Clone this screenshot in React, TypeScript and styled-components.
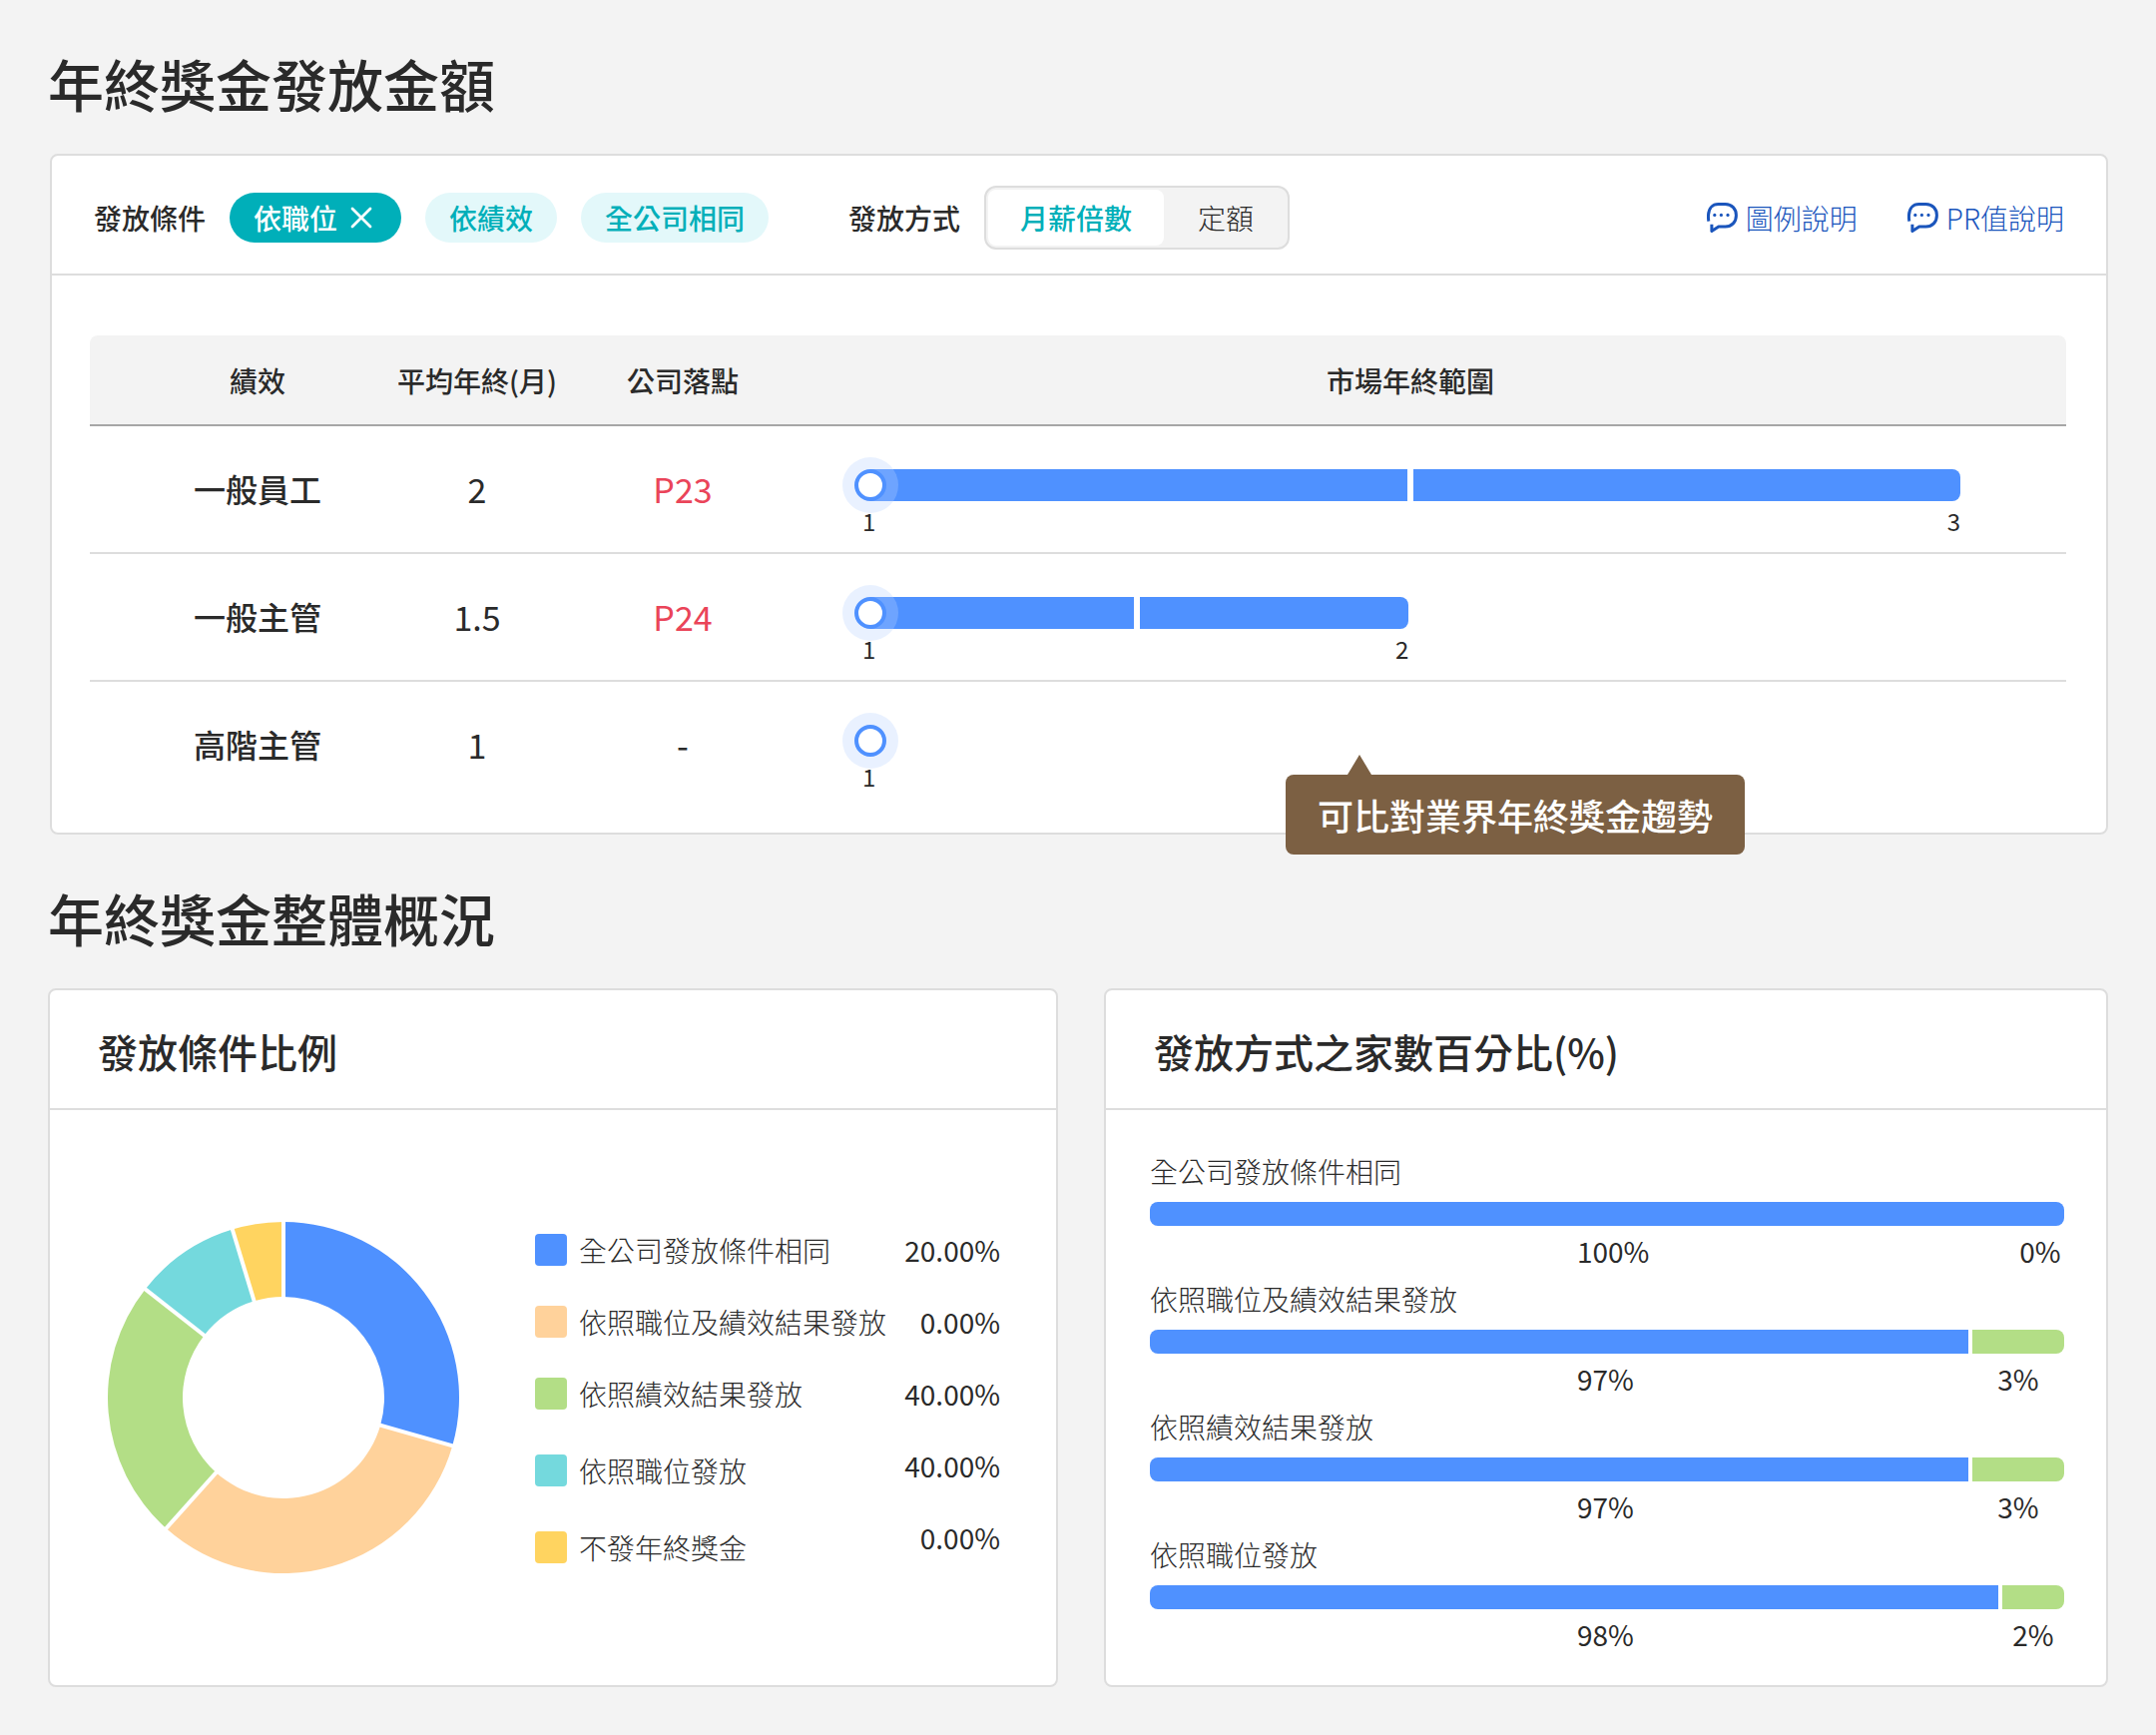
import React, { useState } from "react";
import styled, { createGlobalStyle } from "styled-components";

const color = {
  page: "#f3f3f3",
  line: "#dddddd",
  text: "#2a2a2a",
  teal: "#00afb9",
  tealSoft: "#e3f8fa",
  blue: "#4f91ff",
  peach: "#ffd29b",
  green: "#b3de86",
  aqua: "#74d9dd",
  yellow: "#ffd460",
  red: "#ea4459",
  link: "#1a55bc",
  brown: "#7c6043",
};

const GlobalStyle = createGlobalStyle`
  *, *::before, *::after { box-sizing: border-box; }
  body {
    margin: 0;
    background: ${color.page};
    color: ${color.text};
    font-family: "Noto Sans CJK TC", "Open Sans", sans-serif;
    font-size: 28px;
  }
  button { font: inherit; border: 0; cursor: pointer; }
`;

const Page = styled.main`
  padding: 46px 48px 48px;
`;

const SectionTitle = styled.h1`
  margin: 0 0 34px;
  font-size: 56px;
  line-height: 74px;
  font-weight: 500;
`;

const Card = styled.section`
  position: relative;
  background: #fff;
  border: 2px solid ${color.line};
  border-radius: 8px;
`;

const AmountCard = styled(Card)`
  margin: 0 0 46px 2px;
`;

const Toolbar = styled.div`
  display: flex;
  align-items: center;
  padding: 30px 42px 24px;
  border-bottom: 2px solid ${color.line};
`;

const ControlGroup = styled.div`
  display: flex;
  align-items: center;
  gap: 24px;
  margin-right: 80px;
`;

const ControlLabel = styled.span`
  font-weight: 500;
  line-height: 40px;
`;

const Chip = styled.button<{ $active: boolean }>`
  display: flex;
  align-items: center;
  gap: 8px;
  height: 50px;
  padding: 0 24px;
  border-radius: 25px;
  font-weight: 500;
  background: ${(p) => (p.$active ? color.teal : color.tealSoft)};
  color: ${(p) => (p.$active ? "#fff" : color.teal)};
`;

const Segmented = styled.div`
  display: flex;
  gap: 2px;
  height: 64px;
  padding: 2px;
  border: 2px solid ${color.line};
  border-radius: 12px;
  background: ${color.page};
`;

const Segment = styled.button<{ $active: boolean }>`
  padding: 0 32px;
  border-radius: 8px;
  background: ${(p) => (p.$active ? "#fff" : "transparent")};
  color: ${(p) => (p.$active ? color.teal : color.text)};
  font-weight: ${(p) => (p.$active ? 500 : 300)};
`;

const HelpLinks = styled.nav`
  display: flex;
  gap: 50px;
  margin-left: auto;
`;

const HelpLink = styled.a`
  display: flex;
  align-items: center;
  gap: 8px;
  line-height: 40px;
  font-weight: 300;
  color: ${color.link};
  text-decoration: none;
`;

const TableWrap = styled.div`
  padding: 60px 40px 25px 38px;
`;

const Table = styled.table`
  width: 100%;
  table-layout: fixed;
  border-collapse: separate;
  border-spacing: 0;
`;

const NameCol = styled.col`
  width: 254px;
`;
const AverageCol = styled.col`
  width: 268px;
`;
const PositionCol = styled.col`
  width: 144px;
`;

const HeadCell = styled.th`
  height: 91px;
  padding: 0;
  background: ${color.page};
  border-bottom: 2px solid #a6a6a6;
  font-weight: 500;
  &:first-child {
    padding-left: 82px;
    border-radius: 8px 0 0 0;
  }
  &:last-child {
    border-radius: 0 8px 0 0;
  }
`;

const Row = styled.tr`
  height: 128px;
  &:last-child {
    height: 126px;
  }
  & > * {
    padding: 0 0 2px;
    border-bottom: 2px solid ${color.line};
    text-align: center;
  }
  &:last-child > * {
    border-bottom: 0;
  }
`;

const NameCell = styled.th`
  && {
    padding-left: 82px;
  }
  font-size: 32px;
  font-weight: 500;
`;

const NumberCell = styled.td<{ $accent?: boolean }>`
  font-size: 34px;
  font-weight: 400;
  color: ${(p) => (p.$accent ? color.red : color.text)};
`;

const RangeCell = styled.td`
  && {
    padding: 43px 106px 0 116px;
    vertical-align: top;
  }
`;

const RangeTrack = styled.div`
  position: relative;
  height: 32px;
`;

const RangeBar = styled.div`
  display: flex;
  gap: 6px;
  height: 100%;
`;

const RangeHalf = styled.span`
  flex: 98;
  background: ${color.blue};
  &:last-child {
    flex: 100;
    border-radius: 0 8px 8px 0;
  }
`;

const Marker = styled.svg`
  position: absolute;
  left: -28px;
  top: -12px;
`;

const RangeScale = styled.div`
  display: flex;
  justify-content: space-between;
  margin: 4px 0 0 -8px;
  font-size: 24px;
  line-height: 32px;
  font-weight: 400;
`;

const Tooltip = styled.div`
  position: absolute;
  right: 362px;
  bottom: -22px;
  padding: 0 32px;
  border-radius: 8px;
  background: ${color.brown};
  color: #fff;
  font-size: 36px;
  line-height: 80px;
  font-weight: 500;
  &::before {
    content: "";
    position: absolute;
    left: 62px;
    bottom: 100%;
    border: solid transparent;
    border-width: 0 12px 20px;
    border-bottom-color: ${color.brown};
  }
`;

const Overview = styled.div`
  display: grid;
  grid-template-columns: 1012fr 1006fr;
  gap: 46px;
`;

const CardTitle = styled.h2`
  margin: 0;
  padding: 4px 48px 0;
  border-bottom: 2px solid ${color.line};
  font-size: 40px;
  line-height: 114px;
  font-weight: 500;
`;

const DonutBody = styled.div`
  display: flex;
  align-items: flex-start;
  padding: 112px 56px 0 58px;
`;

const Legend = styled.div`
  display: flex;
  flex: 1;
  justify-content: space-between;
  margin: 12px 0 0 76px;
`;

const LegendList = styled.ul`
  margin: 0;
  padding: 0;
  list-style: none;
  line-height: 32px;
`;

const LegendLabel = styled.li`
  display: flex;
  gap: 12px;
  font-weight: 300;
  & + & {
    margin-top: 40px;
  }
  &:nth-child(n + 4) {
    margin-top: 45px;
  }
`;

const Swatch = styled.span<{ $color: string }>`
  width: 32px;
  height: 32px;
  border-radius: 4px;
  background: ${(p) => p.$color};
`;

const LegendValue = styled.li`
  text-align: right;
  font-weight: 400;
  & + & {
    margin-top: 40px;
  }
`;

const ShareBody = styled.div`
  display: grid;
  gap: 6px;
  padding: 40px 42px 30px 44px;
  line-height: 42px;
  font-weight: 300;
`;

const ShareBar = styled.div`
  display: flex;
  gap: 4px;
  height: 24px;
  margin: 10px 0 4px;
  border-radius: 8px;
  overflow: hidden;
`;

const ShareMain = styled.span`
  flex: 1;
  background: ${color.blue};
`;

const ShareRest = styled.span`
  background: ${color.green};
`;

const ShareValues = styled.div`
  display: flex;
  font-weight: 400;
`;

const MainValue = styled.span`
  flex: 1;
  padding-left: 428px;
`;

const RestValue = styled.span`
  min-width: 48px;
  text-align: center;
`;

const BubbleIcon = () => (
  <svg width="31" height="30" viewBox="0 0 31 30" fill="none" aria-hidden="true">
    <path
      d="M1.9 18.6C1.4 16.6 1.4 14.6 1.5 12.4C1.9 5.6 5.6 1.5 11.5 1.5H18.5C25 1.5 29.4 6 29.4 12.7C29.4 19.4 25 24 18.5 24H11.8L4.9 28.5V21.8"
      stroke="currentColor"
      strokeWidth="3"
      strokeLinejoin="round"
    />
    <g fill="currentColor">
      <circle cx="7.8" cy="12.4" r="1.6" />
      <circle cx="14.4" cy="12.4" r="1.6" />
      <circle cx="21" cy="12.4" r="1.6" />
    </g>
  </svg>
);

const CloseIcon = () => (
  <svg width="32" height="32" viewBox="0 0 32 32" fill="none" aria-hidden="true">
    <path d="M7 7L25 25M25 7L7 25" stroke="currentColor" strokeWidth="2.8" strokeLinecap="round" />
  </svg>
);

const conditions = ["依職位", "依績效", "全公司相同"];
const methods = ["月薪倍數", "定額"];

const rows = [
  { name: "一般員工", average: "2", position: "P23", low: 1, high: 3, width: 100 },
  { name: "一般主管", average: "1.5", position: "P24", low: 1, high: 2, width: 49.4 },
  { name: "高階主管", average: "1", position: "-", low: 1, high: 1, width: 0 },
];

const slices = [
  { label: "全公司發放條件相同", value: "20.00%", color: color.blue, from: 0, to: 105.9 },
  { label: "依照職位及績效結果發放", value: "0.00%", color: color.peach, from: 105.9, to: 221.9 },
  { label: "依照績效結果發放", value: "40.00%", color: color.green, from: 221.9, to: 308.1 },
  { label: "依照職位發放", value: "40.00%", color: color.aqua, from: 308.1, to: 343.1 },
  { label: "不發年終獎金", value: "0.00%", color: color.yellow, from: 343.1, to: 360 },
];

const shares = [
  { label: "全公司發放條件相同", main: "100%", rest: "0%", width: 0 },
  { label: "依照職位及績效結果發放", main: "97%", rest: "3%", width: 92 / 916 },
  { label: "依照績效結果發放", main: "97%", rest: "3%", width: 92 / 916 },
  { label: "依照職位發放", main: "98%", rest: "2%", width: 62 / 916 },
];

const point = (radius: number, angle: number) => {
  const a = (angle * Math.PI) / 180;
  return `${176 + radius * Math.sin(a)} ${176 - radius * Math.cos(a)}`;
};

const Donut = () => (
  <svg width="352" height="352" viewBox="0 0 352 352" role="img" aria-label="發放條件比例">
    {slices.map((s) => {
      const large = s.to - s.from > 180 ? 1 : 0;
      return (
        <path
          key={s.label}
          fill={s.color}
          d={`M${point(176, s.from)}A176 176 0 ${large} 1 ${point(176, s.to)}L${point(101, s.to)}A101 101 0 ${large} 0 ${point(101, s.from)}Z`}
        />
      );
    })}
    {slices.map((s) => (
      <path key={s.label} d={`M${point(98, s.from)}L${point(180, s.from)}`} stroke="#fff" strokeWidth="4" />
    ))}
  </svg>
);

export default function App() {
  const [condition, setCondition] = useState(conditions[0]);
  const [method, setMethod] = useState(methods[0]);

  return (
    <>
      <GlobalStyle />
      <Page>
        <SectionTitle>年終獎金發放金額</SectionTitle>
        <AmountCard>
          <Toolbar>
            <ControlGroup role="group" aria-labelledby="condition-label">
              <ControlLabel id="condition-label">發放條件</ControlLabel>
              {conditions.map((c) => (
                <Chip key={c} type="button" $active={c === condition} aria-pressed={c === condition} onClick={() => setCondition(c)}>
                  {c}
                  {c === condition && <CloseIcon />}
                </Chip>
              ))}
            </ControlGroup>
            <ControlGroup role="group" aria-labelledby="method-label">
              <ControlLabel id="method-label">發放方式</ControlLabel>
              <Segmented>
                {methods.map((m) => (
                  <Segment key={m} type="button" $active={m === method} aria-pressed={m === method} onClick={() => setMethod(m)}>
                    {m}
                  </Segment>
                ))}
              </Segmented>
            </ControlGroup>
            <HelpLinks>
              <HelpLink href="#legend">
                <BubbleIcon />
                圖例說明
              </HelpLink>
              <HelpLink href="#pr">
                <BubbleIcon />
                PR值說明
              </HelpLink>
            </HelpLinks>
          </Toolbar>
          <TableWrap>
            <Table>
              <colgroup>
                <NameCol />
                <AverageCol />
                <PositionCol />
                <col />
              </colgroup>
              <thead>
                <tr>
                  <HeadCell scope="col">績效</HeadCell>
                  <HeadCell scope="col">平均年終(月)</HeadCell>
                  <HeadCell scope="col">公司落點</HeadCell>
                  <HeadCell scope="col">市場年終範圍</HeadCell>
                </tr>
              </thead>
              <tbody>
                {rows.map((r) => (
                  <Row key={r.name}>
                    <NameCell scope="row">{r.name}</NameCell>
                    <NumberCell>{r.average}</NumberCell>
                    <NumberCell $accent={r.position !== "-"}>{r.position}</NumberCell>
                    <RangeCell>
                      <div style={{ width: `${r.width}%` }}>
                        <RangeTrack>
                          {r.width > 0 && (
                            <RangeBar>
                              <RangeHalf />
                              <RangeHalf />
                            </RangeBar>
                          )}
                          <Marker width="56" height="56" viewBox="0 0 56 56" aria-hidden="true">
                            <circle cx="28" cy="28" r="28" fill="rgba(182, 208, 255, 0.3)" />
                            <circle cx="28" cy="28" r="14" fill="#fff" stroke={color.blue} strokeWidth="4" />
                          </Marker>
                        </RangeTrack>
                        <RangeScale>
                          <span>{r.low}</span>
                          {r.width > 0 && <span>{r.high}</span>}
                        </RangeScale>
                      </div>
                    </RangeCell>
                  </Row>
                ))}
              </tbody>
            </Table>
          </TableWrap>
          <Tooltip role="tooltip">可比對業界年終獎金趨勢</Tooltip>
        </AmountCard>

        <SectionTitle>年終獎金整體概況</SectionTitle>
        <Overview>
          <Card>
            <CardTitle>發放條件比例</CardTitle>
            <DonutBody>
              <Donut />
              <Legend>
                <LegendList>
                  {slices.map((s) => (
                    <LegendLabel key={s.label}>
                      <Swatch $color={s.color} />
                      {s.label}
                    </LegendLabel>
                  ))}
                </LegendList>
                <LegendList>
                  {slices.map((s) => (
                    <LegendValue key={s.label}>{s.value}</LegendValue>
                  ))}
                </LegendList>
              </Legend>
            </DonutBody>
          </Card>
          <Card>
            <CardTitle>發放方式之家數百分比(%)</CardTitle>
            <ShareBody>
              {shares.map((s) => (
                <div key={s.label}>
                  <div>{s.label}</div>
                  <ShareBar>
                    <ShareMain />
                    {s.width > 0 && <ShareRest style={{ width: `${s.width * 100}%` }} />}
                  </ShareBar>
                  <ShareValues>
                    <MainValue>{s.main}</MainValue>
                    <RestValue style={{ width: `${s.width * 100}%` }}>{s.rest}</RestValue>
                  </ShareValues>
                </div>
              ))}
            </ShareBody>
          </Card>
        </Overview>
      </Page>
    </>
  );
}
